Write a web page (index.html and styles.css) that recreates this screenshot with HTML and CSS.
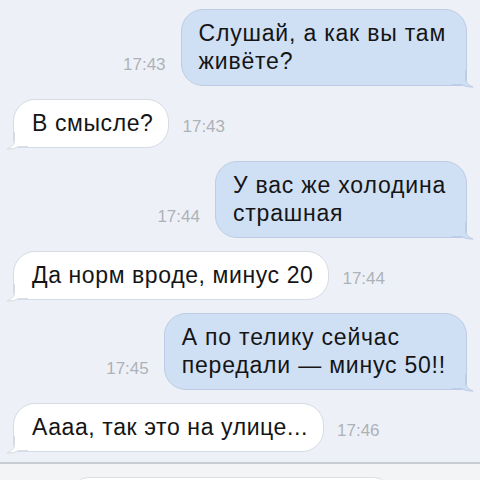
FILE: index.html
```html
<!DOCTYPE html>
<html lang="ru">
<head>
    <meta charset="UTF-8">
    <meta name="viewport" content="width=device-width, initial-scale=1.0">
    <title>Диалог</title>
    <link rel="stylesheet" href="styles.css">
</head>
<body>
    <div class="chat">
        <div class="row out">
            <span class="time">17:43</span>
            <div class="bubble">Слушай, а как вы там<br>живёте?
                <svg class="tail" width="22" height="18" viewBox="0 0 22 18"><path class="tail-fill" d="M0 0H14V8C14 12 16 15 21 17C16 17.2 12 16 9.5 14.5C7 15 4 15 0 15Z"/><path class="tail-line" d="M13.5 0V8C13.5 12 15.5 15 21 17C16 17.2 12 16 9.5 14.5C7 14.5 4 14.5 0 14.5"/></svg>
            </div>
        </div>
        <div class="row in">
            <div class="bubble">В смысле?
                <svg class="tail" width="22" height="18" viewBox="0 0 22 18"><path class="tail-fill" d="M0 0H14V8C14 12 16 15 21 17C16 17.2 12 16 9.5 14.5C7 15 4 15 0 15Z"/><path class="tail-line" d="M13.5 0V8C13.5 12 15.5 15 21 17C16 17.2 12 16 9.5 14.5C7 14.5 4 14.5 0 14.5"/></svg>
            </div>
            <span class="time">17:43</span>
        </div>
        <div class="row out">
            <span class="time">17:44</span>
            <div class="bubble">У вас же холодина<br>страшная
                <svg class="tail" width="22" height="18" viewBox="0 0 22 18"><path class="tail-fill" d="M0 0H14V8C14 12 16 15 21 17C16 17.2 12 16 9.5 14.5C7 15 4 15 0 15Z"/><path class="tail-line" d="M13.5 0V8C13.5 12 15.5 15 21 17C16 17.2 12 16 9.5 14.5C7 14.5 4 14.5 0 14.5"/></svg>
            </div>
        </div>
        <div class="row in">
            <div class="bubble">Да норм вроде, минус 20
                <svg class="tail" width="22" height="18" viewBox="0 0 22 18"><path class="tail-fill" d="M0 0H14V8C14 12 16 15 21 17C16 17.2 12 16 9.5 14.5C7 15 4 15 0 15Z"/><path class="tail-line" d="M13.5 0V8C13.5 12 15.5 15 21 17C16 17.2 12 16 9.5 14.5C7 14.5 4 14.5 0 14.5"/></svg>
            </div>
            <span class="time">17:44</span>
        </div>
        <div class="row out">
            <span class="time">17:45</span>
            <div class="bubble">А по телику сейчас<br>передали — минус 50!!
                <svg class="tail" width="22" height="18" viewBox="0 0 22 18"><path class="tail-fill" d="M0 0H14V8C14 12 16 15 21 17C16 17.2 12 16 9.5 14.5C7 15 4 15 0 15Z"/><path class="tail-line" d="M13.5 0V8C13.5 12 15.5 15 21 17C16 17.2 12 16 9.5 14.5C7 14.5 4 14.5 0 14.5"/></svg>
            </div>
        </div>
        <div class="row in">
            <div class="bubble">Аааа, так это на улице...
                <svg class="tail" width="22" height="18" viewBox="0 0 22 18"><path class="tail-fill" d="M0 0H14V8C14 12 16 15 21 17C16 17.2 12 16 9.5 14.5C7 15 4 15 0 15Z"/><path class="tail-line" d="M13.5 0V8C13.5 12 15.5 15 21 17C16 17.2 12 16 9.5 14.5C7 14.5 4 14.5 0 14.5"/></svg>
            </div>
            <span class="time">17:46</span>
        </div>
    </div>

    <div class="composer">
        <div class="input"></div>
    </div>
</body>
</html>
```

FILE: styles.css
```css
* {
    margin: 0;
    padding: 0;
    box-sizing: border-box;
}

html, body {
    height: 480px;
    overflow: hidden;
}

body {
    font-family: "Liberation Sans", Arial, sans-serif;
    background: #edf1f7;
}

.chat {
    display: flex;
    flex-direction: column;
    gap: 13px;
    padding: 9px 13px 0 13px;
}

.row {
    display: flex;
    align-items: flex-end;
}

.row.out {
    justify-content: flex-end;
    gap: 15px;
}

.row.in {
    justify-content: flex-start;
    gap: 13px;
}

.time {
    font-size: 17px;
    line-height: 20px;
    color: #adb1b8;
    padding-bottom: 11px;
}

.bubble {
    position: relative;
    font-size: 23px;
    line-height: 28px;
    letter-spacing: 0.8px;
    color: #151515;
    padding: 9px 20px 10px 17px;
    border-radius: 22px;
    border: 1px solid;
}

.out .bubble {
    background: #cfe0f5;
    border-color: #bccde3;
    border-bottom-right-radius: 6px;
}

.in .bubble {
    background: #fff;
    border-color: #d6dce5;
    border-bottom-left-radius: 6px;
    padding: 9px 15px 10px 18px;
    letter-spacing: 0.6px;
}

/* хвостик пузыря */
.tail {
    position: absolute;
    bottom: -3px;
    display: block;
}

.out .tail {
    right: -8px;
}

.in .tail {
    left: -8px;
    transform: scaleX(-1);
}

.tail-line {
    fill: none;
    stroke-width: 1;
}

.out .tail-fill {
    fill: #cfe0f5;
}

.out .tail-line {
    stroke: #bccde3;
}

.in .tail-fill {
    fill: #fff;
}

.in .tail-line {
    stroke: #d6dce5;
}

.composer {
    margin-top: 10px;
    border-top: 2px solid #c7cbd2;
    background: #f3f4f6;
    height: 18px;
    overflow: hidden;
    padding: 13px 0 0 72px;
}

.input {
    width: 318px;
    height: 40px;
    background: #fff;
    border: 1px solid #dcdfe4;
    border-radius: 16px;
}
```
